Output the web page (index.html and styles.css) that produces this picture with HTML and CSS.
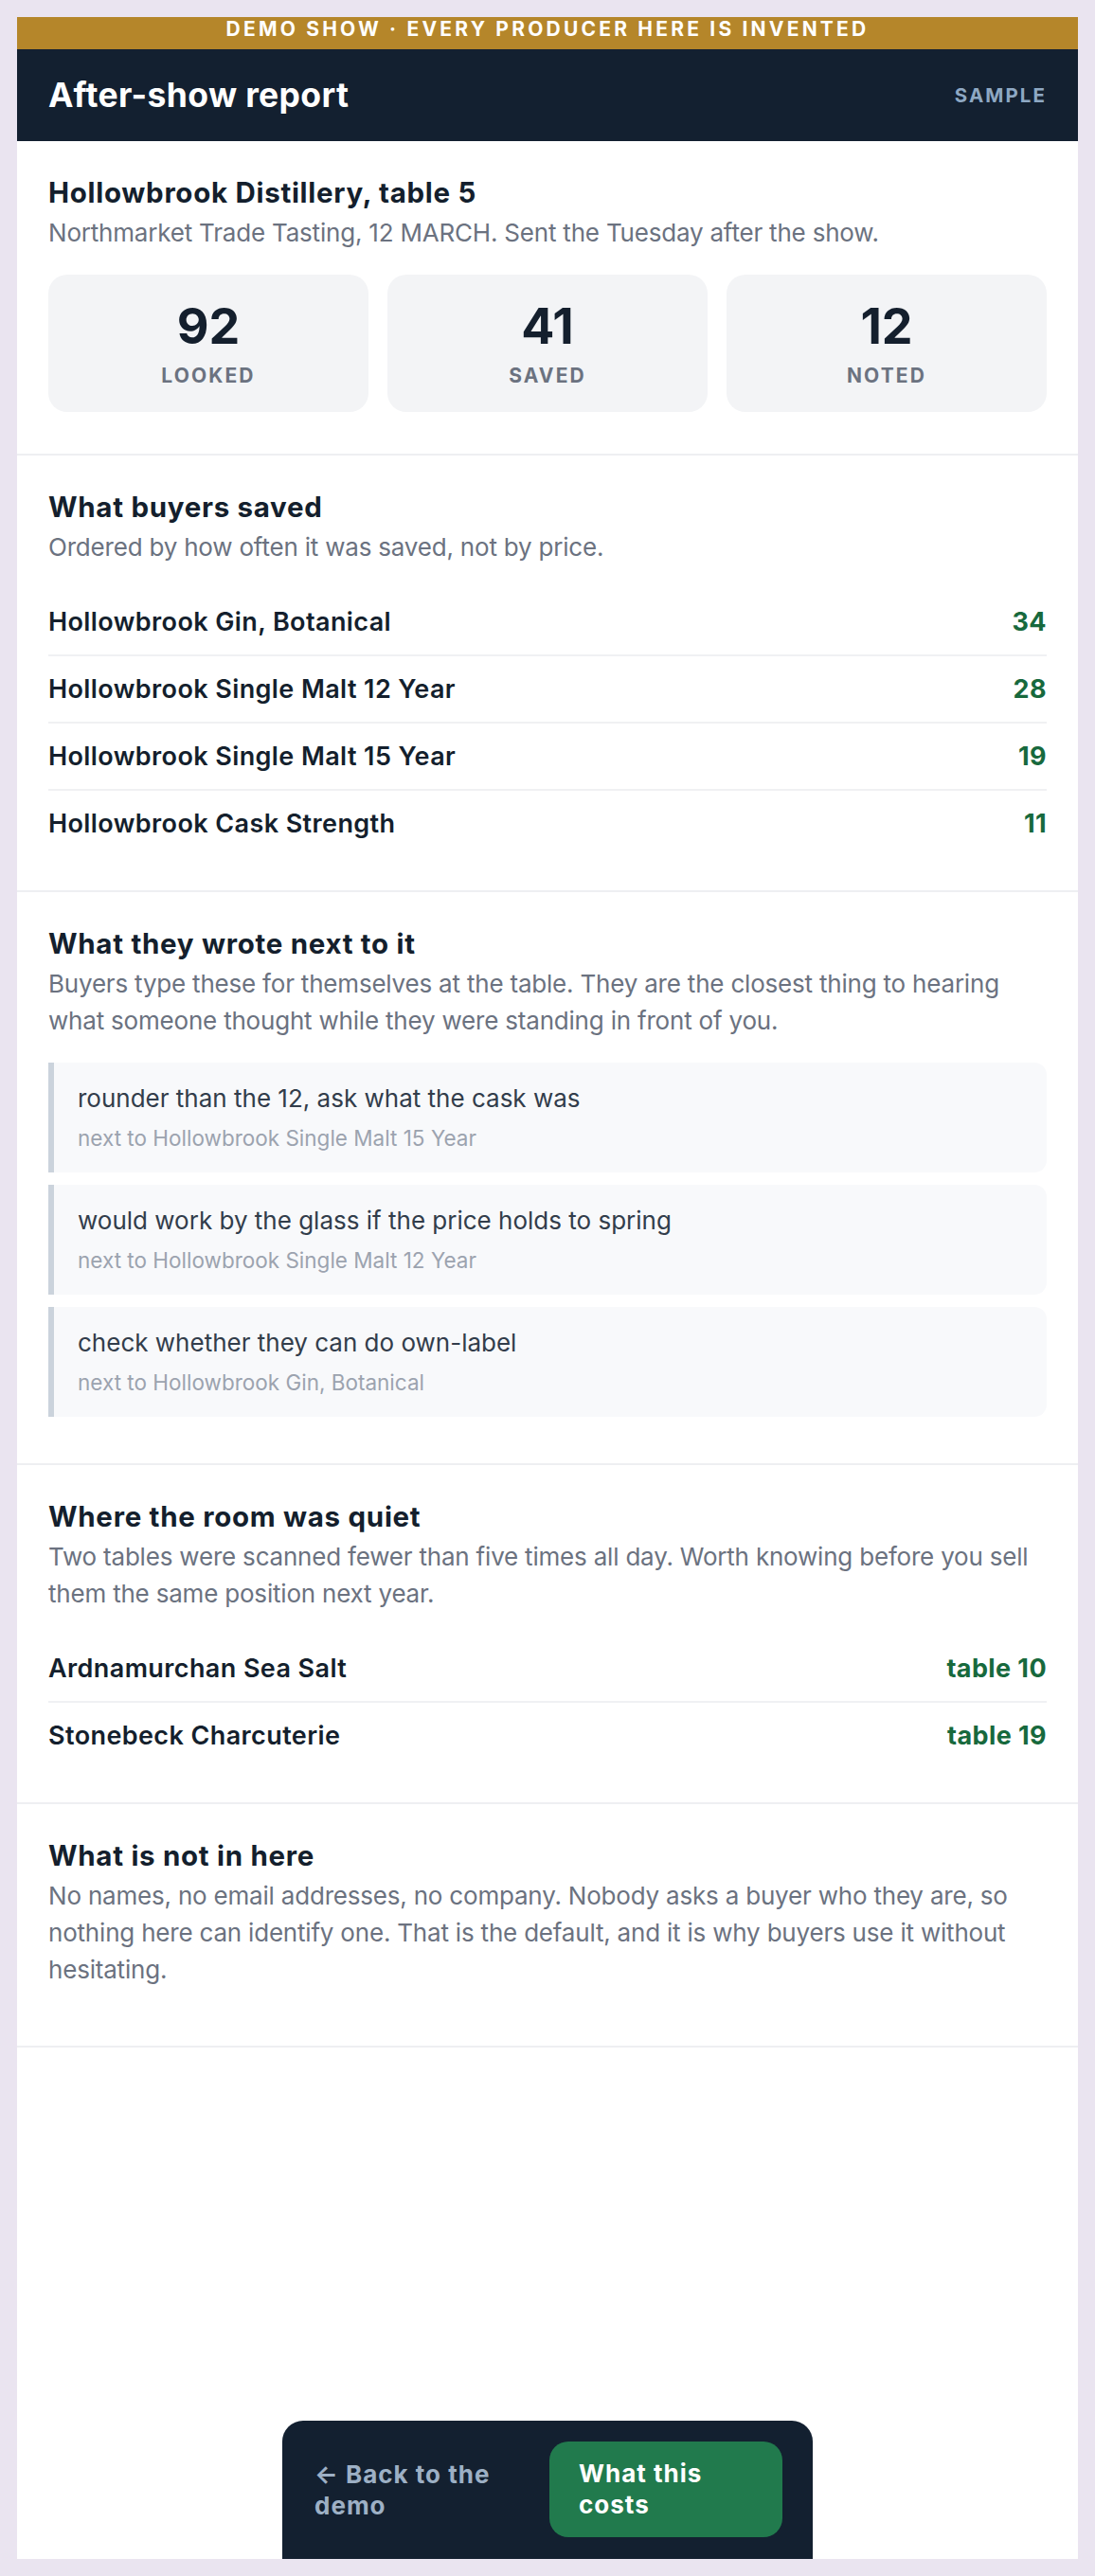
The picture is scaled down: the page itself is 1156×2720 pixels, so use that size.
FILE: index.html
```html
<!DOCTYPE html>
<html lang="en">
<head>
  <meta charset="UTF-8">
  <title>After-show report</title>
  <link rel="stylesheet" href="styles.css">
</head>
<body>
  <div class="frame">
    <div class="demo-banner">DEMO SHOW · EVERY PRODUCER HERE IS INVENTED</div>
    <header class="top">
      <h1>After-show report</h1>
      <span class="tag">SAMPLE</span>
    </header>

    <section class="block">
      <h2>Hollowbrook Distillery, table 5</h2>
      <p class="lede">Northmarket Trade Tasting, 12 MARCH. Sent the Tuesday after the show.</p>
      <div class="stats">
        <div class="stat"><div class="num">92</div><div class="label">LOOKED</div></div>
        <div class="stat"><div class="num">41</div><div class="label">SAVED</div></div>
        <div class="stat"><div class="num">12</div><div class="label">NOTED</div></div>
      </div>
    </section>

    <section class="block">
      <h2>What buyers saved</h2>
      <p class="lede">Ordered by how often it was saved, not by price.</p>
      <ul class="rows">
        <li><span>Hollowbrook Gin, Botanical</span><b>34</b></li>
        <li><span>Hollowbrook Single Malt 12 Year</span><b>28</b></li>
        <li><span>Hollowbrook Single Malt 15 Year</span><b>19</b></li>
        <li><span>Hollowbrook Cask Strength</span><b>11</b></li>
      </ul>
    </section>

    <section class="block">
      <h2>What they wrote next to it</h2>
      <p class="lede">Buyers type these for themselves at the table. They are the closest thing to hearing what someone thought while they were standing in front of you.</p>
      <div class="note">
        <p>rounder than the 12, ask what the cask was</p>
        <small>next to Hollowbrook Single Malt 15 Year</small>
      </div>
      <div class="note">
        <p>would work by the glass if the price holds to spring</p>
        <small>next to Hollowbrook Single Malt 12 Year</small>
      </div>
      <div class="note">
        <p>check whether they can do own-label</p>
        <small>next to Hollowbrook Gin, Botanical</small>
      </div>
    </section>

    <section class="block">
      <h2>Where the room was quiet</h2>
      <p class="lede">Two tables were scanned fewer than five times all day. Worth knowing before you sell them the same position next year.</p>
      <ul class="rows">
        <li><span>Ardnamurchan Sea Salt</span><b>table 10</b></li>
        <li><span>Stonebeck Charcuterie</span><b>table 19</b></li>
      </ul>
    </section>

    <section class="block">
      <h2>What is not in here</h2>
      <p class="lede">No names, no email addresses, no company. Nobody asks a buyer who they are, so nothing here can identify one. That is the default, and it is why buyers use it without hesitating.</p>
    </section>

    <nav class="actions">
      <a class="back" href="#">← Back to the demo</a>
      <a class="cta" href="#">What this costs</a>
    </nav>
  </div>
</body>
</html>
```

FILE: styles.css
```css
* {
  box-sizing: border-box;
}
body {
  margin: 0;
  padding: 18px;
  background-color: #eae4f0;
  font-family: Inter, "Noto Sans", sans-serif;
  color: #141f2d;
}
.frame {
  background: #fff;
  min-height: calc(100vh - 36px);
  display: flex;
  flex-direction: column;
  overflow: hidden;
}
.demo-banner {
  height: 34px;
  line-height: 25px;
  background-color: #b5862a;
  color: #fff;
  font-size: 21px;
  font-weight: 700;
  letter-spacing: 3.2px;
  text-align: center;
}
.top {
  background-color: #132030;
  padding: 27px 33px;
  display: flex;
  align-items: center;
  justify-content: space-between;
}
.top h1 {
  margin: 0;
  color: #fff;
  font-size: 35.5px;
  font-weight: 700;
  letter-spacing: 0.35px;
  line-height: 43px;
}
.tag {
  color: #8ea8c3;
  font-size: 20.5px;
  font-weight: 700;
  letter-spacing: 0.1em;
}
.block {
  padding: 36px 33px;
  border-bottom: 2px solid #eeeff2;
}
.block h2 {
  margin: 0 0 5px;
  font-size: 29.5px;
  font-weight: 700;
  letter-spacing: 0.7px;
  line-height: normal;
}
.lede {
  margin: 0 0 25px;
  color: #6b7280;
  font-size: 26px;
  letter-spacing: -0.2px;
  line-height: 39px;
}
.stats {
  display: grid;
  grid-template-columns: repeat(3, 1fr);
  gap: 20px;
  margin-bottom: 8px;
}
.stat {
  background-color: #f3f4f6;
  border-radius: 20px;
  padding: 23px 16px 26px;
  text-align: center;
}
.num {
  font-size: 52px;
  font-weight: 700;
  line-height: normal;
}
.label {
  margin-top: 8px;
  color: #6b7280;
  font-size: 21px;
  font-weight: 700;
  letter-spacing: 0.1em;
}
.rows {
  list-style: none;
  margin: 0;
  padding: 0;
}
.rows li {
  display: flex;
  justify-content: space-between;
  padding: 15px 0;
  font-size: 27px;
  line-height: 39px;
  font-weight: 600;
  letter-spacing: 0.4px;
  border-bottom: 2px solid #f0f1f3;
}
.rows li:last-child {
  border-bottom: none;
}
.rows b {
  color: #17693d;
  font-weight: 700;
}
.note {
  background-color: #f8f9fb;
  border-left: 6px solid #cbd3dc;
  border-radius: 0 13px 13px 0;
  padding: 18px 25px 20px;
  margin-bottom: 13px;
}
.note p {
  margin: 0 0 7px;
  color: #323d4b;
  font-size: 26px;
  line-height: 39px;
}
.note small {
  display: block;
  color: #9ca3af;
  font-size: 22.5px;
  line-height: 32px;
}
.actions {
  margin: auto auto 0;
  width: 560px;
  background-color: #132030;
  border-radius: 22px 22px 0 0;
  padding: 22px 32px 23px 34px;
  display: flex;
  align-items: center;
  justify-content: space-between;
}
.actions a {
  text-decoration: none;
  font-size: 26px;
  font-weight: 700;
  letter-spacing: 1px;
  line-height: 33px;
}
.back {
  color: #9db0c5;
  width: 205px;
}
.cta {
  background-color: #217a4d;
  color: #fff;
  width: 246px;
  border-radius: 20px;
  padding: 17px 31px 18px;
}
```
